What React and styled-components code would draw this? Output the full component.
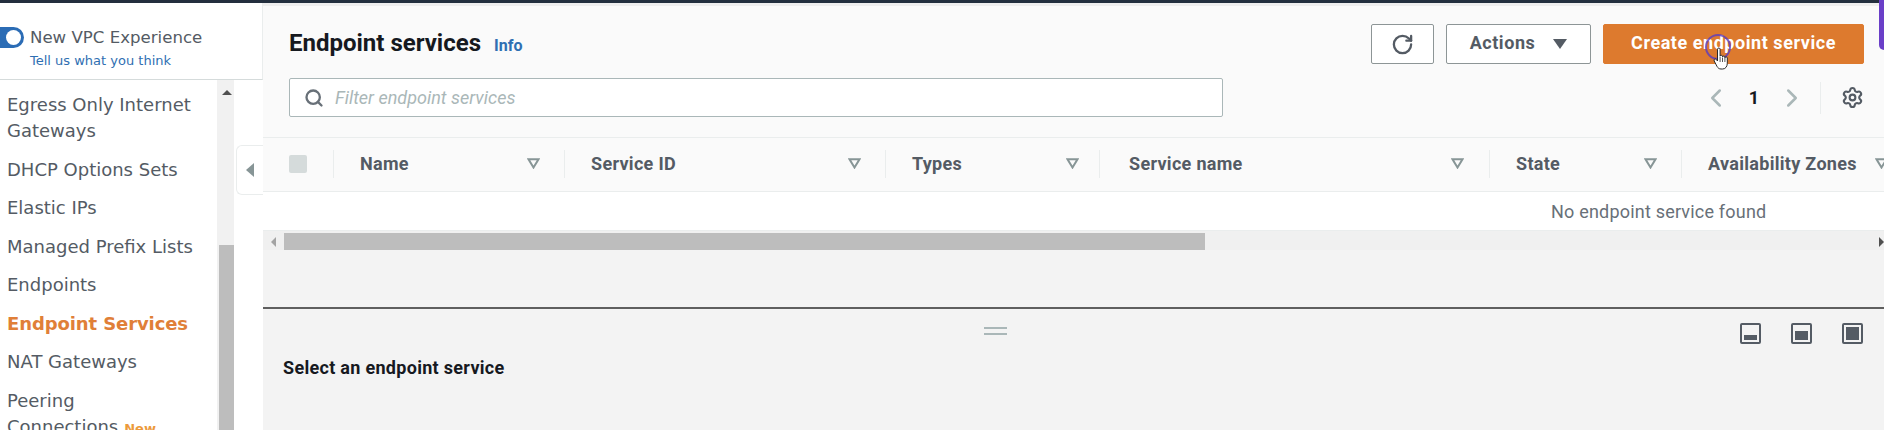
import React from 'react';
import styled, { createGlobalStyle } from 'styled-components';
import { RotateCw, Search, ChevronLeft, ChevronRight, Settings } from 'lucide-react';

const GlobalStyle = createGlobalStyle`
  html, body { margin: 0; padding: 0; background: #fff; }
  body { font-family: Roboto, "Open Sans", "Liberation Sans", sans-serif; }
  * { box-sizing: border-box; }
`;

const Page = styled.div`
  position: relative;
  width: 1884px;
  height: 430px;
  overflow: hidden;
  display: flex;
  flex-direction: column;
`;

const TopBar = styled.div`
  height: 3px;
  flex: none;
  background: #232f3e;
`;

const Body = styled.div`
  flex: 1;
  min-height: 0;
  display: flex;
`;

const Sidebar = styled.aside`
  position: relative;
  width: 263px;
  flex: none;
  display: flex;
  flex-direction: column;
  background: #fff;
`;

const SideHead = styled.div`
  height: 77px;
  flex: none;
  padding-top: 25px;
  display: flex;
  gap: 6px;
  border-bottom: 1px solid #d5dbdb;
  border-right: 1px solid #eaeded;
`;

const Toggle = styled.span`
  position: relative;
  width: 24px;
  height: 21px;
  margin-top: -1px;
  flex: none;
  background: #2b6cb5;
  border-radius: 0 11px 11px 0;
  &::after {
    content: '';
    position: absolute;
    right: 3px;
    top: 3px;
    width: 15px;
    height: 15px;
    border-radius: 50%;
    background: #fff;
  }
`;

const SideTitle = styled.div`
  font-family: "DejaVu Sans", sans-serif;
  font-size: 16.6px;
  line-height: 20px;
  color: #545b64;
`;

const SideLink = styled.div`
  font-family: "DejaVu Sans", sans-serif;
  font-size: 13px;
  line-height: 18px;
  margin-top: 4px;
  color: #2f6fb2;
`;

const SideScroll = styled.div`
  flex: 1;
  min-height: 0;
  display: flex;
`;

const NavList = styled.nav`
  width: 217px;
  flex: none;
  padding: 12px 0 0 7px;
  overflow: hidden;
`;

const NavItem = styled.div`
  font-family: "DejaVu Sans", sans-serif;
  font-size: 18px;
  line-height: 26px;
  margin-bottom: 12.5px;
  white-space: pre-line;
  color: ${({ $active }) => ($active ? '#e07f38' : '#545b64')};
  font-weight: ${({ $active }) => ($active ? 700 : 400)};
  letter-spacing: ${({ $active }) => ($active ? '-0.1px' : '0')};
`;

const NewTag = styled.span`
  font-size: 13px;
  font-weight: 700;
  color: #ec9a3c;
  margin-left: 6px;
`;

const ScrollTrack = styled.div`
  width: 17px;
  flex: none;
  background: #f1f1f1;
  padding-top: 165px;
  position: relative;
`;

const TrackArrow = styled.span`
  position: absolute;
  left: 5px;
  top: 10px;
  border-left: 5px solid transparent;
  border-right: 5px solid transparent;
  border-bottom: 5px solid #505050;
`;

const TrackThumb = styled.div`
  height: 100%;
  margin-left: 2px;
  background: #bdbdbd;
`;

const CollapseTab = styled.div`
  position: absolute;
  left: 236px;
  top: 142px;
  width: 27px;
  height: 50px;
  display: flex;
  align-items: center;
  justify-content: center;
  background: #fff;
  border: 1px solid #eaeded;
  border-right: none;
  border-radius: 6px 0 0 6px;
  &::after {
    content: '';
    border-top: 7px solid transparent;
    border-bottom: 7px solid transparent;
    border-right: 8px solid #879596;
  }
`;

const Main = styled.main`
  flex: 1;
  min-width: 0;
  display: flex;
  flex-direction: column;
  background: #f3f3f3;
`;

const UpperPane = styled.section`
  height: 306px;
  flex: none;
  display: flex;
  flex-direction: column;
  border-top: 3px solid #eeeeee;
  border-bottom: 2px solid #5f5f5f;
`;

const PageTools = styled.div`
  height: 131px;
  flex: none;
  padding: 18px 20px 0 26px;
  background: #fafafa;
  display: flex;
  flex-direction: column;
  gap: 14px;
`;

const HeadRow = styled.div`
  height: 40px;
  display: flex;
  align-items: center;
`;

const Title = styled.h1`
  margin: -3px 0 0;
  font-size: 24px;
  font-weight: 700;
  color: #16191f;
`;

const InfoLink = styled.a`
  margin: 3px 0 0 13px;
  font-size: 16px;
  font-weight: 700;
  color: #2f6fb2;
`;

const Actions = styled.div`
  margin-left: auto;
  display: flex;
  gap: 12px;
`;

const Button = styled.button`
  height: 40px;
  width: ${({ $width }) => $width}px;
  display: flex;
  align-items: center;
  justify-content: center;
  gap: 18px;
  font-family: inherit;
  font-size: 18px;
  font-weight: 700;
  letter-spacing: 0.55px;
  border-radius: 2px;
  padding: 0 0 4px;
  color: ${({ $primary }) => ($primary ? '#fff' : '#545b64')};
  background: ${({ $primary }) => ($primary ? '#dd7a2e' : '#fff')};
  border: 1px solid ${({ $primary }) => ($primary ? '#dd7a2e' : '#8d9596')};
`;

const Caret = styled.span`
  margin-top: 3px;
  border-left: 7px solid transparent;
  border-right: 7px solid transparent;
  border-top: 10px solid #545b64;
`;

const IconButton = styled(Button)`
  padding: 0;
`;

const FilterRow = styled.div`
  height: 39px;
  display: flex;
  align-items: center;
`;

const FilterBox = styled.div`
  width: 934px;
  height: 39px;
  display: flex;
  align-items: center;
  gap: 11px;
  padding-left: 14px;
  background: #fff;
  border: 1px solid #aab7b8;
  border-radius: 2px;
  color: #687078;
`;

const Placeholder = styled.span`
  font-size: 18px;
  font-style: italic;
  color: #aab7b8;
`;

const Pager = styled.div`
  margin-left: auto;
  display: flex;
  align-items: center;
  height: 39px;
`;

const PageNumber = styled.span`
  width: 46px;
  text-align: center;
  font-size: 18px;
  font-weight: 700;
  color: #16191f;
`;

const GearCell = styled.div`
  margin-left: 13px;
  height: 32px;
  padding-left: 20px;
  display: flex;
  align-items: center;
  border-left: 1px solid #eaeded;
  color: #545b64;
`;

const TableHead = styled.div`
  height: 55px;
  flex: none;
  display: grid;
  grid-template-columns: 71px 231px 321px 214px 390px 192px 231px;
  align-items: center;
  background: #fafafa;
  border-top: 1px solid #eaeded;
  border-bottom: 1px solid #eaeded;
  overflow: hidden;
`;

const HeadCell = styled.div`
  height: 28px;
  margin-top: -2px;
  display: flex;
  align-items: center;
  justify-content: space-between;
  padding: 0 ${({ $end }) => $end || 24}px 0 ${({ $inset }) => $inset || 26}px;
  border-right: 1px solid #eaeded;
  font-size: 18px;
  font-weight: 700;
  letter-spacing: 0.3px;
  color: #545b64;
  white-space: nowrap;
`;

const CheckCell = styled(HeadCell)`
  padding-left: 26px;
`;

const Check = styled.span`
  width: 18px;
  height: 18px;
  border-radius: 2px;
  background: #d5dbdb;
`;

const EmptyRow = styled.div`
  height: 38px;
  flex: none;
  padding-left: 1288px;
  display: flex;
  align-items: center;
  background: #fff;
  font-size: 18px;
  letter-spacing: 0.2px;
  color: #687078;
  white-space: nowrap;
`;

const HScroll = styled.div`
  height: 20px;
  flex: none;
  display: flex;
  align-items: flex-end;
  background: #f0f0f0;
  border-top: 1px solid #eaeded;
`;

const HArrow = styled.span`
  width: 21px;
  height: 17px;
  flex: none;
  display: flex;
  align-items: center;
  justify-content: ${({ $right }) => ($right ? 'flex-end' : 'center')};
  margin-left: ${({ $right }) => ($right ? 'auto' : '0')};
  &::after {
    content: '';
    border-top: 5px solid transparent;
    border-bottom: 5px solid transparent;
    border-${({ $right }) => ($right ? 'left' : 'right')}: 5px solid ${({ $right }) => ($right ? '#505050' : '#a3a3a3')};
  }
`;

const HThumb = styled.div`
  width: 921px;
  height: 17px;
  background: #bdbdbd;
`;

const LowerPane = styled.section`
  flex: 1;
  min-height: 0;
  padding: 0 21px 0 20px;
  position: relative;
`;

const DragHandle = styled.div`
  width: 23px;
  height: 8px;
  margin: 18px 0 0 701px;
  border-top: 2px solid #aab7b8;
  border-bottom: 2px solid #aab7b8;
`;

const SplitIcons = styled.div`
  position: absolute;
  top: 14px;
  right: 21px;
  display: flex;
  gap: 30px;
`;

const SelectHint = styled.div`
  margin-top: 22px;
  font-size: 18px;
  font-weight: 700;
  letter-spacing: 0.3px;
  line-height: 22px;
  color: #16191f;
`;

const RecordRing = styled.span`
  position: absolute;
  left: 1705px;
  top: 34px;
  width: 26px;
  height: 26px;
  border-radius: 50%;
  border: 2px solid #5a3cc0;
  opacity: 0.8;
`;

const PointerSvg = styled.svg`
  position: absolute;
  left: 1713px;
  top: 47px;
`;

const EdgeTab = styled.div`
  position: absolute;
  right: 0;
  top: 0;
  width: 5px;
  height: 50px;
  background: #6a3fc8;
  border-radius: 0 0 0 6px;
`;

function SortIcon() {
  return (
    <svg width="13" height="11" viewBox="0 0 13 11">
      <path d="M1.5 1.2h10L6.5 9.5z" fill="none" stroke="#879596" strokeWidth="2" />
    </svg>
  );
}

function PanelIcon({ fill }) {
  const top = 17 - fill;
  return (
    <svg width="21" height="21" viewBox="0 0 21 21">
      <rect x="1" y="1" width="19" height="19" rx="1" fill="none" stroke="#545b64" strokeWidth="2" />
      <rect x="4" y={top} width="13" height={fill} fill="#545b64" />
    </svg>
  );
}

const columns = [
  { label: 'Name' },
  { label: 'Service ID' },
  { label: 'Types', end: 20 },
  { label: 'Service name', inset: 29, end: 25 },
  { label: 'State' },
  { label: 'Availability Zones' },
];

const navItems = [
  { label: 'Egress Only Internet\nGateways' },
  { label: 'DHCP Options Sets' },
  { label: 'Elastic IPs' },
  { label: 'Managed Prefix Lists' },
  { label: 'Endpoints' },
  { label: 'Endpoint Services', active: true },
  { label: 'NAT Gateways' },
  { label: 'Peering\nConnections', tag: 'New' },
];

export default function App() {
  return (
    <Page>
      <GlobalStyle />
      <TopBar />
      <Body>
        <Sidebar>
          <SideHead>
            <Toggle />
            <div>
              <SideTitle>New VPC Experience</SideTitle>
              <SideLink>Tell us what you think</SideLink>
            </div>
          </SideHead>
          <SideScroll>
            <NavList>
              {navItems.map((item) => (
                <NavItem key={item.label} $active={item.active}>
                  {item.label}
                  {item.tag && <NewTag>{item.tag}</NewTag>}
                </NavItem>
              ))}
            </NavList>
            <ScrollTrack>
              <TrackArrow />
              <TrackThumb />
            </ScrollTrack>
          </SideScroll>
          <CollapseTab />
        </Sidebar>
        <Main>
          <UpperPane>
            <PageTools>
              <HeadRow>
                <Title>Endpoint services</Title>
                <InfoLink>Info</InfoLink>
                <Actions>
                  <IconButton $width={63}><RotateCw size={23} strokeWidth={2.4} /></IconButton>
                  <Button $width={145}>Actions<Caret /></Button>
                  <Button $width={261} $primary>Create endpoint service</Button>
                </Actions>
              </HeadRow>
              <FilterRow>
                <FilterBox>
                  <Search size={20} strokeWidth={2.8} />
                  <Placeholder>Filter endpoint services</Placeholder>
                </FilterBox>
                <Pager>
                  <ChevronLeft size={30} color="#aab7b8" strokeWidth={2} />
                  <PageNumber>1</PageNumber>
                  <ChevronRight size={30} color="#aab7b8" strokeWidth={2} />
                  <GearCell><Settings size={23} strokeWidth={2.2} /></GearCell>
                </Pager>
              </FilterRow>
            </PageTools>
            <TableHead>
              <CheckCell><Check /></CheckCell>
              {columns.map((col) => (
                <HeadCell key={col.label} $inset={col.inset} $end={col.end}>
                  {col.label}
                  <SortIcon />
                </HeadCell>
              ))}
            </TableHead>
            <EmptyRow>No endpoint service found</EmptyRow>
            <HScroll>
              <HArrow />
              <HThumb />
              <HArrow $right />
            </HScroll>
          </UpperPane>
          <LowerPane>
            <DragHandle />
            <SplitIcons>
              <PanelIcon fill={5} />
              <PanelIcon fill={9} />
              <PanelIcon fill={13} />
            </SplitIcons>
            <SelectHint>Select an endpoint service</SelectHint>
          </LowerPane>
        </Main>
      </Body>
      <RecordRing />
      <PointerSvg width="18" height="24" viewBox="0 0 18 24">
        <path
          d="M4.5 2.2c0-1.6 2.6-1.6 2.6 0v7c0-1.2 2.4-1.2 2.4 0v.8c0-1.2 2.4-1.2 2.4 0v.8c0-1.2 2.4-1.2 2.4 0v5.4c0 3-1.6 5.8-4.6 5.8H8c-2 0-3-1-4-2.6L1.2 14c-.8-1.6 1-2.8 2.2-1.4l1.1 1.4z"
          fill="#fff"
          stroke="#2a2a2a"
          strokeWidth="1"
        />
        <path d="M7.1 10v5M9.5 10.5v4.5M11.9 11v4" stroke="#2a2a2a" strokeWidth="0.8" />
      </PointerSvg>
      <EdgeTab />
    </Page>
  );
}
